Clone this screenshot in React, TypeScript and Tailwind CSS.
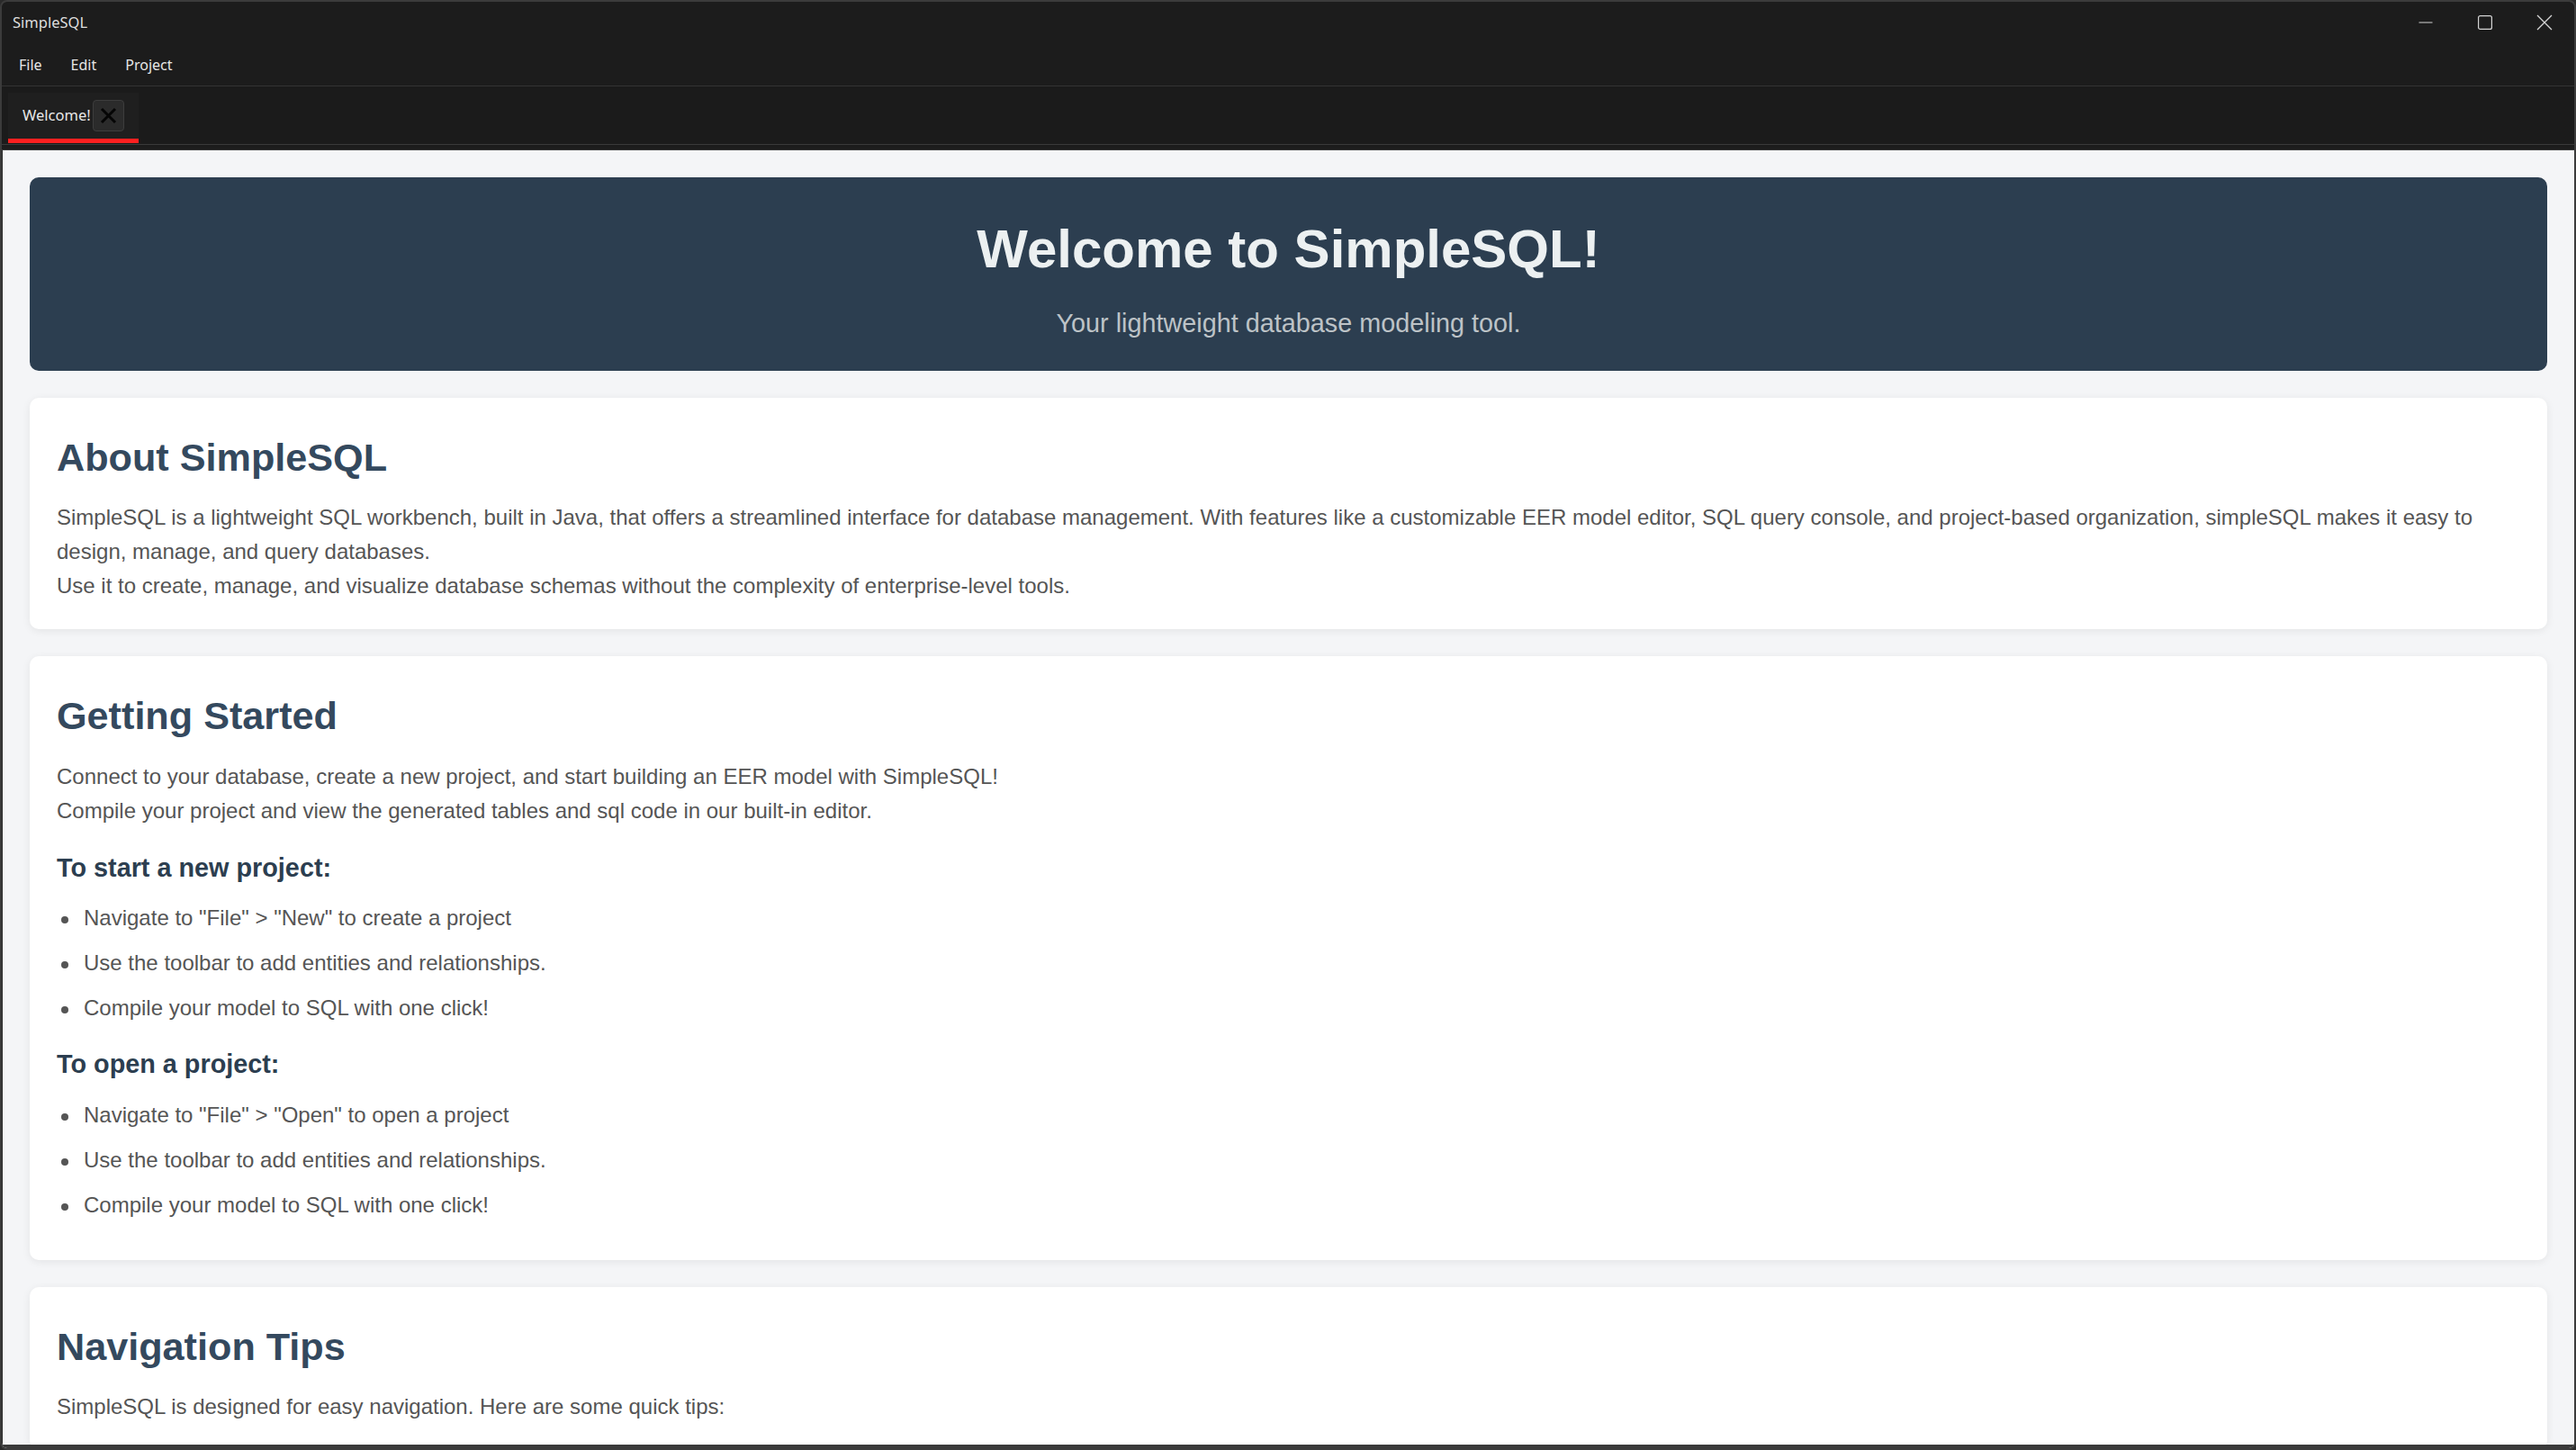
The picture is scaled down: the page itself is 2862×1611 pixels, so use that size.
import React from "react";

const startSteps = [
  'Navigate to "File" > "New" to create a project',
  "Use the toolbar to add entities and relationships.",
  "Compile your model to SQL with one click!",
];

const openSteps = [
  'Navigate to "File" > "Open" to open a project',
  "Use the toolbar to add entities and relationships.",
  "Compile your model to SQL with one click!",
];

const Card = ({ children, className = "" }: { children: React.ReactNode; className?: string }) => (
  <section
    className={
      "bg-white rounded-[10px] shadow-[0_2px_10px_rgba(0,0,0,0.07)] px-[30px] pt-[42px] pb-[28px] shrink-0 " +
      className
    }
  >
    {children}
  </section>
);

const CardTitle = ({ children }: { children: React.ReactNode }) => (
  <h2 className="text-[43.2px] leading-[48px] font-bold text-[#34495e]">{children}</h2>
);

const StepList = ({ items }: { items: string[] }) => (
  <ul className="mt-[21.5px] mb-[14px] flex flex-col gap-[11.6px]">
    {items.map((item) => (
      <li key={item} className="flex items-start">
        <span className="mt-[17px] ml-[5px] w-[8px] h-[8px] rounded-full bg-[#555] shrink-0" />
        <span className="ml-[17px]">{item}</span>
      </li>
    ))}
  </ul>
);

const WindowButtons = () => (
  <div className="flex h-full">
    <div className="w-[66px] h-full flex items-center justify-center">
      <svg width="16" height="2" viewBox="0 0 16 2">
        <line x1="0.5" y1="1" x2="15.5" y2="1" stroke="#d4d4d4" strokeWidth="1.2" />
      </svg>
    </div>
    <div className="w-[66px] h-full flex items-center justify-center">
      <svg width="16" height="16" viewBox="0 0 16 16">
        <rect x="0.6" y="0.6" width="14.8" height="14.8" rx="2" fill="none" stroke="#d4d4d4" strokeWidth="1.2" />
      </svg>
    </div>
    <div className="w-[66px] h-full flex items-center justify-center">
      <svg width="18" height="18" viewBox="0 0 18 18">
        <path d="M1 1 L17 17 M17 1 L1 17" stroke="#d4d4d4" strokeWidth="1.3" />
      </svg>
    </div>
  </div>
);

export default function App() {
  return (
    <div className="w-[2862px] h-[1611px] bg-[#2a2a2a] overflow-hidden">
      <div className="w-full h-full flex flex-col bg-[#1c1c1c] border-2 border-[#3b3b3b] rounded-[8px] overflow-hidden font-['Noto_Sans',sans-serif]">
        {/* title bar */}
        <div className="h-[46px] shrink-0 flex items-center justify-between">
          <span className="pl-[12px] text-[16.5px] text-[#dedede]">SimpleSQL</span>
          <WindowButtons />
        </div>

        {/* menu bar */}
        <div className="h-[48px] shrink-0 flex items-center pl-[3px] border-b border-[#333] text-[16px] text-[#e6e6e6]">
          <span className="px-[16px]">File</span>
          <span className="px-[16px]">Edit</span>
          <span className="px-[16px]">Project</span>
        </div>

        {/* tabs */}
        <div className="h-[64px] shrink-0 pt-[7px] pl-[7px] bg-[#1b1b1b]">
          <div className="w-[145px] h-[56px] bg-[#1f1f1f] border-b-[5px] border-[#ff2020] flex items-center pl-[16px]">
            <span className="text-[16.5px] text-[#e8e8e8]">Welcome!</span>
            <span className="ml-[2px] w-[35px] h-[35px] rounded-[4px] bg-[#2b2b2b] border border-[#3d3d3d] flex items-center justify-center">
              <svg width="19" height="19" viewBox="0 0 19 19">
                <path d="M2 2 L17 17 M17 2 L2 17" stroke="#050505" strokeWidth="3" />
              </svg>
            </span>
          </div>
        </div>
        <div className="h-[7px] shrink-0 border-y border-[#3a3a3a] bg-[#1c1c1c]" />

        {/* content */}
        <main className="flex-1 min-h-0 overflow-hidden bg-[#f4f5f7] border-l border-[#2a2a2a] border-b-[4px] border-b-[#3a3a3a] px-[30px] pt-[30px] flex flex-col gap-[30px] font-['Liberation_Sans',Arial,sans-serif] text-[24px] leading-[38.4px] text-[#555]">
          <header className="bg-[#2c3e50] rounded-[10px] pt-[46px] pb-[37px] text-center shrink-0">
            <h1 className="text-[60px] leading-[67px] font-bold text-[#ecf0f1]">Welcome to SimpleSQL!</h1>
            <p className="mt-[33px] text-[28.8px] leading-[32px] text-[#bdc3c7]">
              Your lightweight database modeling tool.
            </p>
          </header>

          <Card>
            <CardTitle>About SimpleSQL</CardTitle>
            <p className="mt-[23.5px]">
              SimpleSQL is a lightweight SQL workbench, built in Java, that offers a streamlined interface for
              database management. With features like a customizable EER model editor, SQL query console, and
              project-based organization, simpleSQL makes it easy to design, manage, and query databases.
              <br />
              Use it to create, manage, and visualize database schemas without the complexity of enterprise-level
              tools.
            </p>
          </Card>

          <Card>
            <CardTitle>Getting Started</CardTitle>
            <p className="mt-[25px]">
              Connect to your database, create a new project, and start building an EER model with SimpleSQL!
              <br />
              Compile your project and view the generated tables and sql code in our built-in editor.
            </p>
            <h3 className="mt-[27px] text-[28.8px] leading-[32px] font-bold text-[#2c3e50]">To start a new project:</h3>
            <StepList items={startSteps} />
            <h3 className="mt-[27px] text-[28.8px] leading-[32px] font-bold text-[#2c3e50]">To open a project:</h3>
            <StepList items={openSteps} />
          </Card>

          <Card>
            <CardTitle>Navigation Tips</CardTitle>
            <p className="mt-[23.5px]">SimpleSQL is designed for easy navigation. Here are some quick tips:</p>
          </Card>
        </main>
      </div>
    </div>
  );
}
